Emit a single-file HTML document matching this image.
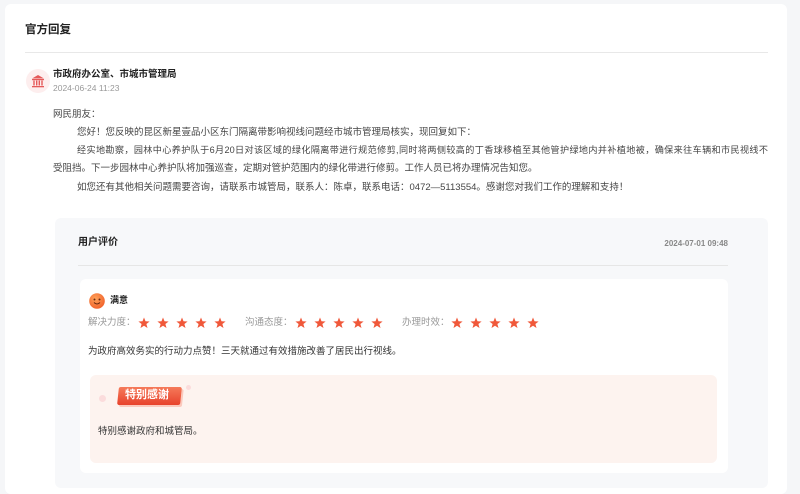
<!DOCTYPE html>
<html><head><meta charset="utf-8">
<style>
*{margin:0;padding:0;box-sizing:border-box}
body{width:800px;height:480px;background:#f5f6f8;font-family:"Liberation Sans","Noto Sans CJK SC",sans-serif;color:#333;position:relative;overflow:hidden}
.a{position:absolute;white-space:nowrap;line-height:1}
.card{position:absolute;left:5px;top:4px;width:782px;height:490px;background:#fff;border-radius:6px}
.t{font-size:9.5px;color:#444}
</style></head><body>
<div class="card"></div>
<div class="a" style="left:25px;top:25px;font-size:11.5px;font-weight:bold;color:#222">官方回复</div>
<div style="position:absolute;left:25px;top:52px;width:743px;height:1px;background:#e8e8e8"></div>
<div style="position:absolute;left:26px;top:69px;width:24px;height:24px;border-radius:50%;background:#fdeeee"></div>
<svg style="position:absolute;left:31px;top:74px" width="14" height="14" viewBox="0 0 14 14" fill="#e55a5a"><path d="M7 1L1 4.5h12z"/><rect x="1" y="5" width="12" height="1.2"/><rect x="2.3" y="6.5" width="1.4" height="5"/><rect x="5" y="6.5" width="1.4" height="5"/><rect x="7.6" y="6.5" width="1.4" height="5"/><rect x="10.3" y="6.5" width="1.4" height="5"/><rect x="1" y="12" width="12" height="1.3"/></svg>
<div class="a" style="left:53px;top:70px;font-size:9.5px;font-weight:bold;color:#222">市政府办公室、市城市管理局</div>
<div class="a" style="left:53px;top:84px;font-size:8.5px;color:#999">2024-06-24 11:23</div>
<div class="a t" style="left:53px;top:110px">网民朋友：</div>
<div class="a t" style="left:77px;top:128px">您好！您反映的昆区新星壹品小区东门隔离带影响视线问题经市城市管理局核实，现回复如下：</div>
<div class="a t" style="left:77px;top:146px;width:691px;font-size:9.1px;text-align:justify;text-align-last:justify">经实地勘察，园林中心养护队于6月20日对该区域的绿化隔离带进行规范修剪,同时将两侧较高的丁香球移植至其他管护绿地内并补植地被，确保来往车辆和市民视线不</div>
<div class="a t" style="left:53px;top:164px">受阻挡。下一步园林中心养护队将加强巡查，定期对管护范围内的绿化带进行修剪。工作人员已将办理情况告知您。</div>
<div class="a t" style="left:77px;top:183px">如您还有其他相关问题需要咨询，请联系市城管局，联系人：陈卓，联系电话：0472—5113554。感谢您对我们工作的理解和支持！</div>

<div style="position:absolute;left:55px;top:218px;width:713px;height:270px;background:#f7f8fa;border-radius:6px"></div>
<div class="a" style="left:78px;top:238px;font-size:10px;font-weight:bold;color:#222">用户评价</div>
<div class="a" style="left:656px;top:240px;font-size:8px;font-weight:bold;color:#888;width:72px;text-align:right">2024-07-01 09:48</div>
<div style="position:absolute;left:78px;top:265px;width:650px;height:1px;background:#e6e6e6"></div>
<div style="position:absolute;left:80px;top:279px;width:648px;height:194px;background:#fff;border-radius:6px"></div>
<svg style="position:absolute;left:89px;top:293px" width="16" height="16" viewBox="0 0 16 16"><defs><radialGradient id="g" cx="40%" cy="35%" r="70%"><stop offset="0" stop-color="#ffa25a"/><stop offset="1" stop-color="#f0602a"/></radialGradient></defs><circle cx="8" cy="8" r="7.8" fill="url(#g)"/><circle cx="5.5" cy="6.5" r="1" fill="#6a2a10"/><circle cx="10.5" cy="6.5" r="1" fill="#6a2a10"/><path d="M5 9.5Q8 12.5 11 9.5" stroke="#6a2a10" stroke-width="1" fill="none"/></svg>
<div class="a" style="left:110px;top:296px;font-size:9px;font-weight:bold;color:#222">满意</div>
<div class="a" style="left:88px;top:318px;font-size:9.5px;color:#999">解决力度：</div>
<div class="a" style="left:245px;top:318px;font-size:9.5px;color:#999">沟通态度：</div>
<div class="a" style="left:402px;top:318px;font-size:9.5px;color:#999">办理时效：</div>
<div class="a t" style="left:88px;top:347px;color:#333">为政府高效务实的行动力点赞！三天就通过有效措施改善了居民出行视线。</div>
<div style="position:absolute;left:90px;top:375px;width:627px;height:88px;background:#fdf3ef;border-radius:6px"></div>
<div style="position:absolute;left:99px;top:395px;width:7px;height:7px;border-radius:50%;background:#fbdcdc"></div>
<div style="position:absolute;left:186px;top:385px;width:5px;height:5px;border-radius:50%;background:#fbdcdc"></div>
<div style="position:absolute;left:118px;top:387px;width:63px;height:18px;background:linear-gradient(#f57a5a,#e8422c);border-radius:2px;transform:skewX(-6deg);box-shadow:2px 2px 0 #fbc9bd"></div>
<div class="a" style="left:125px;top:390px;font-size:11px;font-weight:bold;color:#fff">特别感谢</div>
<div class="a t" style="left:98px;top:427px;color:#333">特别感谢政府和城管局。</div>
<svg width="0" height="0" style="position:absolute"><defs><path id="s" d="M6 0.5L7.5 4.3L11.6 4.5L8.4 7L9.5 11L6 8.7L2.5 11L3.6 7L0.4 4.5L4.5 4.3Z" fill="#f0583a"/></defs></svg>
<svg style="position:absolute;left:0;top:0" width="800" height="480">
<g transform="translate(138,317)"><use href="#s"/><use href="#s" x="19"/><use href="#s" x="38"/><use href="#s" x="57"/><use href="#s" x="76"/></g>
<g transform="translate(295,317)"><use href="#s"/><use href="#s" x="19"/><use href="#s" x="38"/><use href="#s" x="57"/><use href="#s" x="76"/></g>
<g transform="translate(451,317)"><use href="#s"/><use href="#s" x="19"/><use href="#s" x="38"/><use href="#s" x="57"/><use href="#s" x="76"/></g>
</svg>
</body></html>
